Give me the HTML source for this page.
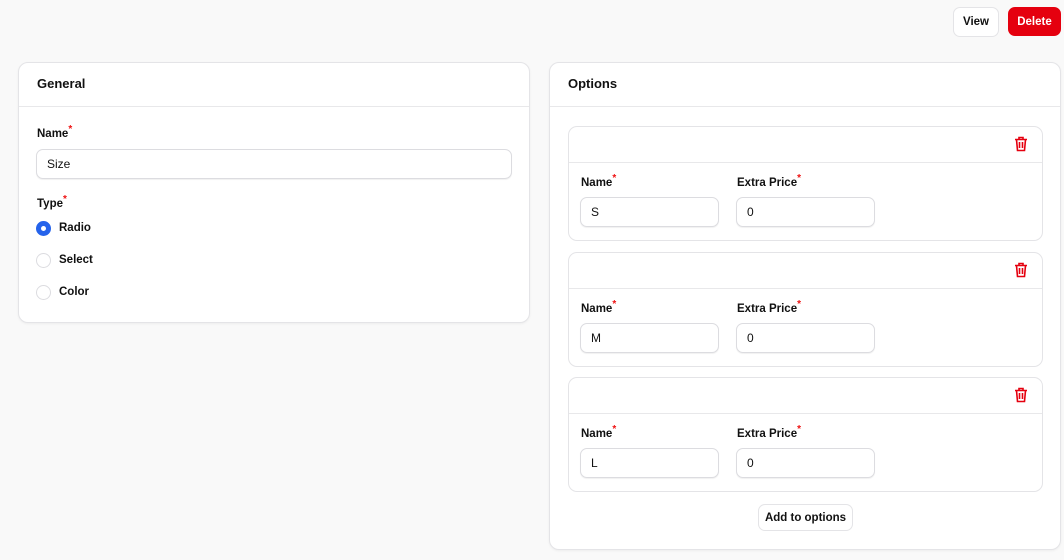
<!DOCTYPE html><html><head><style>
*{box-sizing:border-box;margin:0;padding:0}
body{width:1064px;height:560px;background:#f9f9f9;font-family:"Liberation Sans",sans-serif;font-size:12px;color:#111;position:relative;overflow:hidden}
.a{position:absolute}
.card{background:#fff;border:1px solid #e4e4e7;border-radius:10px;box-shadow:0 1px 2px rgba(0,0,0,.05)}
.h{font-weight:bold;font-size:13px}
.line{height:1px;background:#e8e8ea}
.lbl{font-weight:bold;font-size:11.5px}
.lbl sup{color:#e11;font-size:10px;vertical-align:top;position:relative;top:-4px}
.inp{background:#fff;border:1px solid #dcdce0;border-radius:7px;box-shadow:0 1px 1px rgba(0,0,0,.06);padding-left:10px;display:flex;align-items:center;font-size:12px}
.btn{border:1px solid #e4e4e7;background:#fff;border-radius:7px;font-weight:bold;display:flex;align-items:center;justify-content:center;font-size:11.5px}
.rad{width:15px;height:15px;border-radius:50%;border:1px solid #dcdce0;background:#fff}
.on{background:#2563eb;border:none;display:flex;align-items:center;justify-content:center}
.on:after{content:"";width:5px;height:5px;border-radius:50%;background:#fff}
</style></head><body>
<div class="a btn" style="left:953px;top:7px;width:46px;height:30px">View</div>
<div class="a btn" style="left:1008px;top:7px;width:53px;height:29px;background:#e5000f;border-color:#e5000f;color:#fff">Delete</div>

<div class="a card" style="left:18px;top:62px;width:512px;height:261px"></div>
<div class="a h" style="left:37px;top:76px">General</div>
<div class="a line" style="left:19px;top:106px;width:510px"></div>
<div class="a lbl" style="left:37px;top:128px">Name<sup>*</sup></div>
<div class="a inp" style="left:36px;top:149px;width:476px;height:30px">Size</div>
<div class="a lbl" style="left:37px;top:198px">Type<sup>*</sup></div>
<div class="a rad on" style="left:36px;top:221px"></div><div class="a lbl" style="left:59px;top:222px">Radio</div>
<div class="a rad" style="left:36px;top:253px"></div><div class="a lbl" style="left:59px;top:254px">Select</div>
<div class="a rad" style="left:36px;top:285px"></div><div class="a lbl" style="left:59px;top:286px">Color</div>

<div class="a card" style="left:549px;top:62px;width:512px;height:488px"></div>
<div class="a h" style="left:568px;top:76px">Options</div>
<div class="a line" style="left:550px;top:106px;width:510px"></div>

<div id="opts"></div>
<div class="a btn" style="left:758px;top:504px;width:95px;height:27px">Add to options</div>
<script>
var ys=[126,252,377],v=["S","M","L"],h="";
ys.forEach(function(y,i){
h+='<div class="a card" style="left:568px;top:'+y+'px;width:475px;height:115px;border-radius:9px;box-shadow:none"></div>'
+'<div class="a line" style="left:569px;top:'+(y+36)+'px;width:473px"></div>'
+'<svg class="a" style="left:1014px;top:'+(y+10)+'px" width="14" height="16" viewBox="0 0 14 16" fill="none" stroke="#e5000f" stroke-width="1.6"><path d="M1 3.5h12M5 3.5V1.5h4v2M2.5 3.5l1 11h7l1-11M5.5 6v6M8.5 6v6"/></svg>'
+'<div class="a lbl" style="left:581px;top:'+(y+51)+'px">Name<sup>*</sup></div>'
+'<div class="a lbl" style="left:737px;top:'+(y+51)+'px">Extra Price<sup>*</sup></div>'
+'<div class="a inp" style="left:580px;top:'+(y+71)+'px;width:139px;height:30px">'+v[i]+'</div>'
+'<div class="a inp" style="left:736px;top:'+(y+71)+'px;width:139px;height:30px">0</div>';
});
document.getElementById("opts").outerHTML=h;
</script>
</body></html>
